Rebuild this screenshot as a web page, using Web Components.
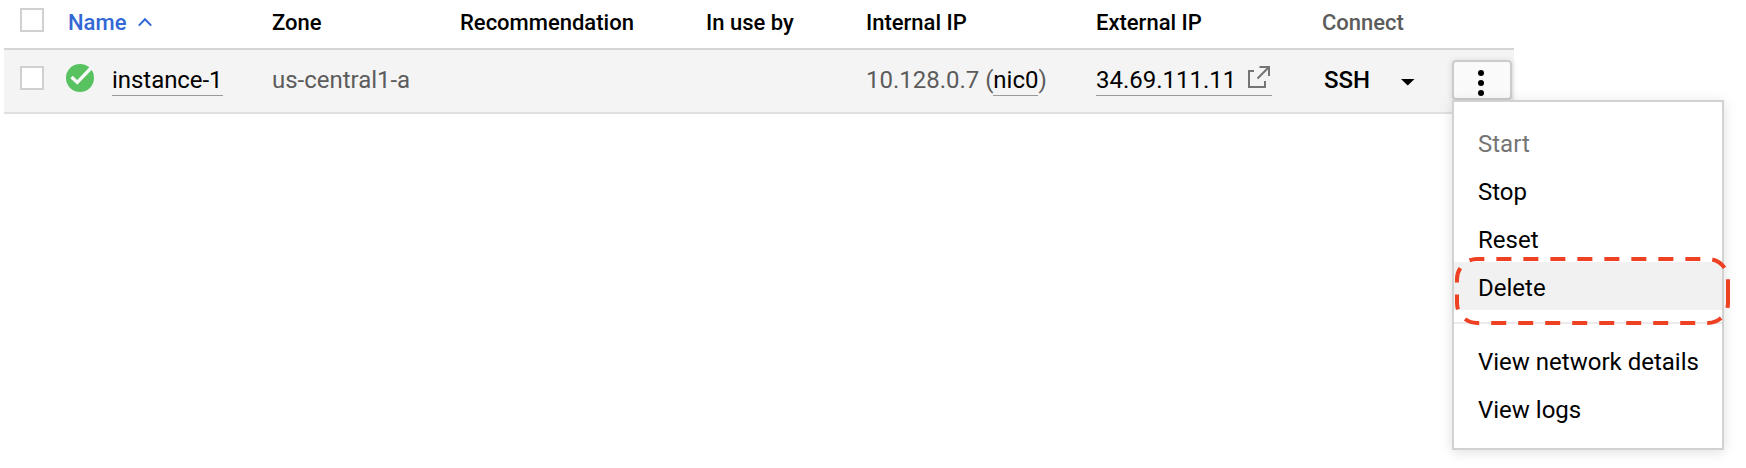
<!DOCTYPE html>
<html lang="en">
<head>
<meta charset="utf-8">
<title>VM instances</title>
<style>
body { margin: 0; min-height: 468px; background: #fff; font-family: Roboto, sans-serif; color: #000; }
</style>
</head>
<body>
<vm-table>
  <vm-row kind="head">
    <check-box slot="check"></check-box>
    <sort-label slot="name">Name</sort-label>
    <span slot="zone">Zone</span>
    <span slot="rec">Recommendation</span>
    <span slot="use">In use by</span>
    <span slot="internal">Internal IP</span>
    <span slot="external">External IP</span>
    <span slot="connect" style="color:#5c5c5c">Connect</span>
  </vm-row>
  <vm-row kind="body">
    <check-box slot="check"></check-box>
    <instance-name slot="name">instance-1</instance-name>
    <span slot="zone">us-central1-a</span>
    <span slot="internal">10.128.0.7 (<text-link>nic0</text-link>)</span>
    <text-link slot="external" external>34.69.111.11</text-link>
    <ssh-control slot="connect">SSH</ssh-control>
    <more-button slot="more">
      <action-menu>
        <menu-item disabled>Start</menu-item>
        <menu-item>Stop</menu-item>
        <menu-item>Reset</menu-item>
        <menu-item active>Delete</menu-item>
        <menu-divider></menu-divider>
        <menu-item>View network details</menu-item>
        <menu-item>View logs</menu-item>
      </action-menu>
    </more-button>
  </vm-row>
</vm-table>
<script>
const define = (name, html) => customElements.define(name, class extends HTMLElement {
  constructor() {
    super();
    const t = document.createElement('template');
    t.innerHTML = html;
    this.attachShadow({ mode: 'open' }).appendChild(t.content.cloneNode(true));
  }
});

define('vm-table', `<style>
:host { display: block; width: 1510px; height: 468px; margin-left: 4px; }
</style><slot></slot>`);

define('vm-row', `<style>
:host { display: grid; box-sizing: border-box; white-space: nowrap;
  grid-template-columns: 64px 204px 188px 246px 160px 230px 226px 130px 62px; }
:host([kind=head]) { height: 50px; border-bottom: 2px solid #d5d5d5; font-size: 22px; font-weight: 500; line-height: 26px; padding-top: 10px; }
:host([kind=body]) { height: 64px; border-bottom: 2px solid #e0e0e0; background: #f4f4f4; font-size: 24px; line-height: 28px; letter-spacing: -.02px; color: #5c5c5c; padding-top: 16px; }
:host([kind=head]) .check { margin-top: -2px; }
.check { padding-left: 16px; }
.more { margin-top: -6px; }
</style>
<div class="check"><slot name="check"></slot></div>
<div><slot name="name"></slot></div>
<div><slot name="zone"></slot></div>
<div><slot name="rec"></slot></div>
<div><slot name="use"></slot></div>
<div><slot name="internal"></slot></div>
<div><slot name="external"></slot></div>
<div><slot name="connect"></slot></div>
<div class="more"><slot name="more"></slot></div>`);

define('check-box', `<style>
:host { display: block; width: 24px; height: 24px; box-sizing: border-box; border: 2px solid #d0d0d0; background: #fff; }
</style>`);

define('sort-label', `<style>
:host { display: flex; color: #3367d6; }
svg { margin: 7px 0 0 12px; }
</style><slot></slot><svg width="14" height="10" fill="none" stroke="#3367d6" stroke-width="2"><path d="M.8 8.6 7 2.2l6.2 6.4"/></svg>`);

define('instance-name', `<style>
:host { display: flex; }
svg { margin: -2px 18px 0 -2px; flex: none; }
text-link { letter-spacing: -.05px; }
</style>
<svg width="28" height="28"><circle cx="14" cy="14" r="14" fill="#57c25f"/><path d="M5.500 13 11.300 18.500 25.500 3.500" fill="none" stroke="#f8f8f8" stroke-width="3.300"/></svg>
<text-link><slot></slot></text-link>`);

customElements.define('text-link', class extends HTMLElement {
  constructor() {
    super();
    this.attachShadow({ mode: 'open' }).innerHTML = `<style>
:host { display: inline-block; color: #000; height: 29px; line-height: 28px; border-bottom: 1px solid #999; vertical-align: top; }
:host([external]) { display: flex; width: 176px; box-sizing: border-box; height: 30px; justify-content: space-between; }
svg { margin: 0 2px 0 0; flex: none; }
</style><slot></slot>${this.hasAttribute('external') ? `<svg width="23" height="23" fill="none" stroke="#757575" stroke-width="2"><path d="M7 5H2v16h16v-6M10.500 12.500 21.500 1.500M12.500 1h9.500v9"/></svg>` : ''}`;
  }
});

define('ssh-control', `<style>
:host { display: flex; color: #000; font-weight: 500; padding-left: 2px; }
svg { margin: 13px 0 0 31px; }
</style><slot></slot><svg width="14" height="7"><path d="M0 0h13.500L6.750 6.500z"/></svg>`);

define('more-button', `<style>
:host { display: block; position: relative; width: 60px; height: 40px; }
.button { box-sizing: border-box; width: 60px; height: 40px; border: 2px solid #ccc; border-radius: 4px; background: #fafafa; box-shadow: 0 1px 6px rgba(0,0,0,.14); }
::slotted(action-menu) { position: absolute; top: 40px; left: 0; }
svg { display: block; }
</style><div class="button"><svg width="56" height="36"><g fill="#000"><circle cx="27" cy="11" r="3"/><circle cx="27" cy="21" r="3"/><circle cx="27" cy="31" r="3"/></g></svg></div><slot></slot>`);

define('action-menu', `<style>
:host { display: block; box-sizing: border-box; width: 272px; height: 350px; border: 2px solid #d2d2d2; background: #fff; padding: 16px 0; letter-spacing: 0; box-shadow: 0 2px 12px rgba(0,0,0,.13); }
.ring { position: absolute; left: 1px; top: 155px; overflow: visible; pointer-events: none; }
</style><slot></slot>
<svg class="ring" width="275" height="68"><path d="M273 36V46A20 20 0 0 1 253 66H22A20 20 0 0 1 2 46V22A20 20 0 0 1 22 2H253A20 20 0 0 1 273 22V36" fill="none" stroke="#ee4023" stroke-width="4" stroke-dasharray="15 12"/></svg>`);

define('menu-item', `<style>
:host { display: block; height: 48px; line-height: 52px; padding-left: 24px; color: #000; font-size: 24px; }
:host([disabled]) { color: #757575; }
:host([active]) { background: #f1f1f1; }
</style><slot></slot>`);

define('menu-divider', `<style>
:host { display: block; height: 2px; margin: 12px 0; background: #ebebeb; }
</style>`);
</script>
</body>
</html>
